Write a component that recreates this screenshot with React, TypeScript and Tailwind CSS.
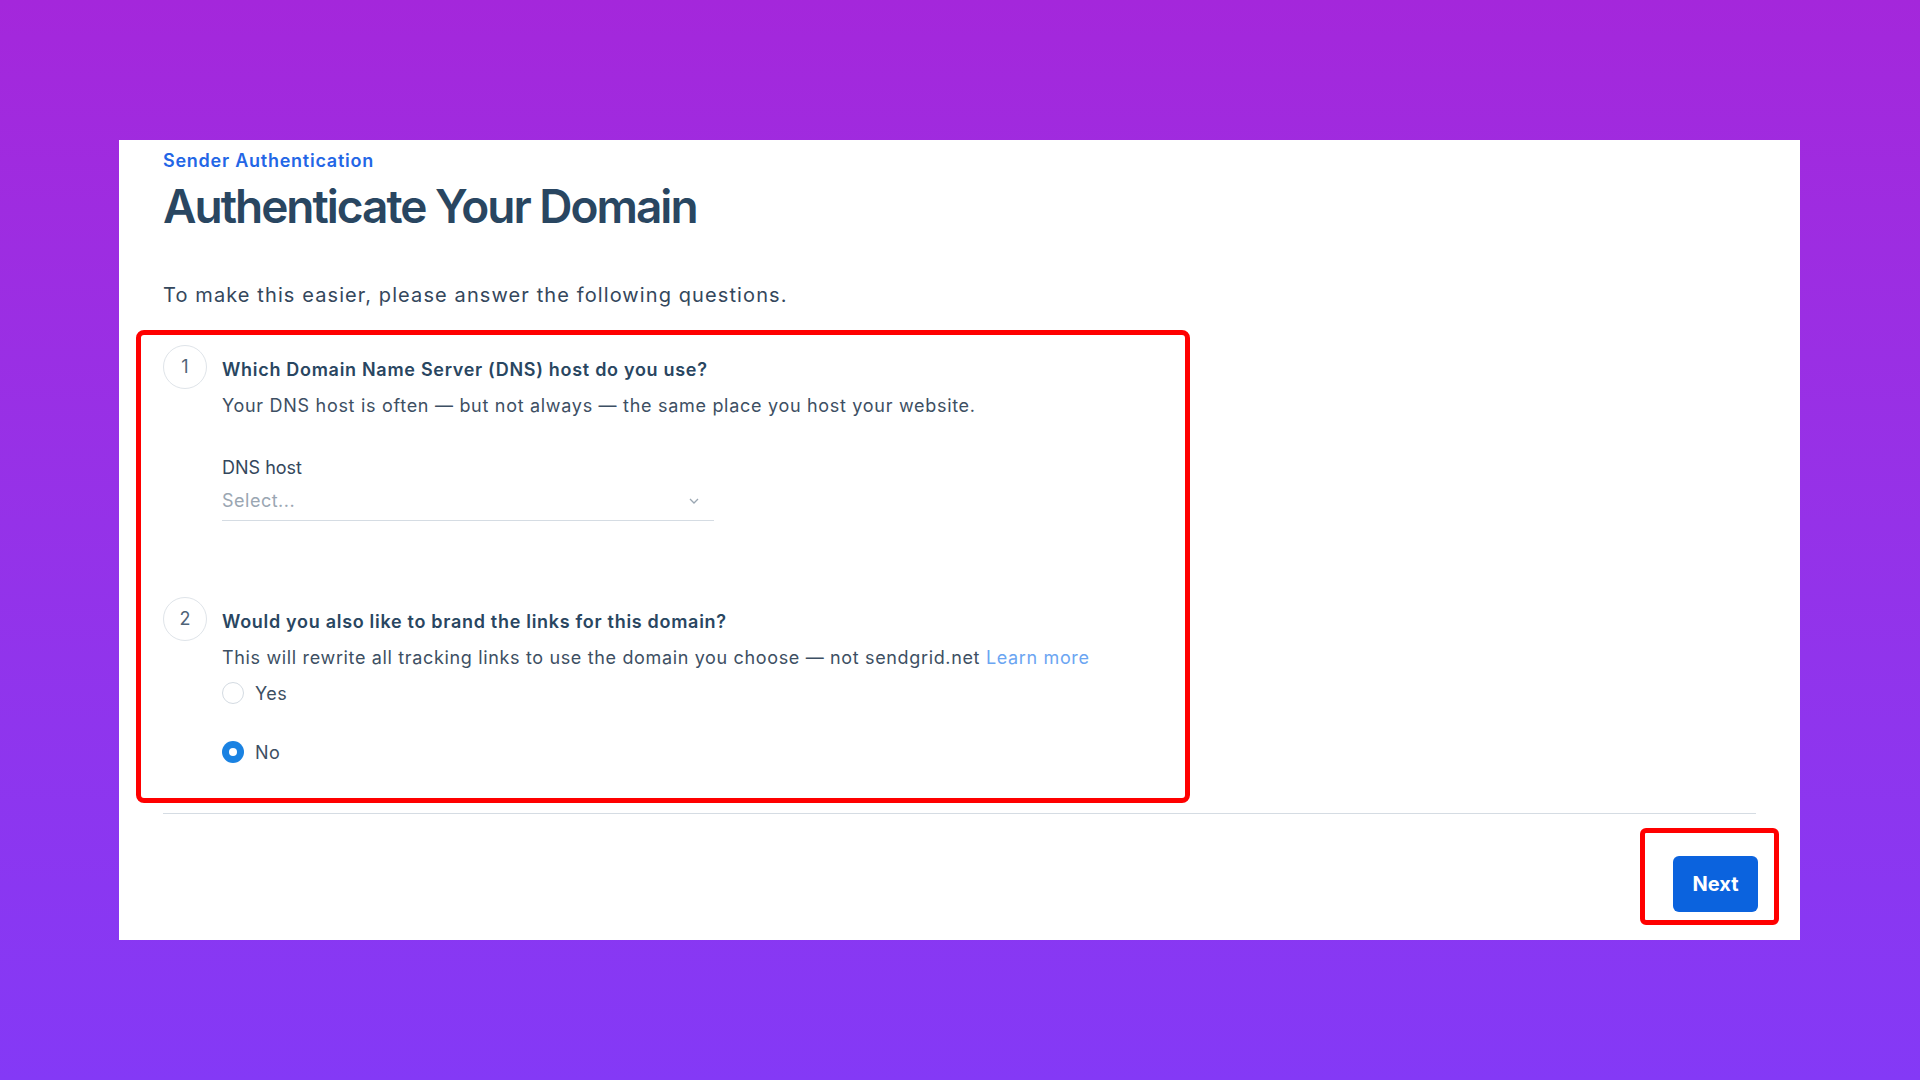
import React from "react";

const font = { fontFamily: "Inter, 'Noto Sans', Arial, sans-serif" };

function StepCircle({ n }: { n: number }) {
  return (
    <div className="flex h-[44px] w-[44px] shrink-0 items-center justify-center rounded-full border-[1.5px] border-[#dfe4e9] text-[18px] leading-none text-[#4f6478]">
      {n}
    </div>
  );
}

function Radio({ checked, label }: { checked?: boolean; label: string }) {
  return (
    <div className="flex items-center gap-[11px]">
      {checked ? (
        <div className="flex h-[22px] w-[22px] items-center justify-center rounded-full bg-[#1a82e2]">
          <div className="h-[8px] w-[8px] rounded-full bg-white" />
        </div>
      ) : (
        <div className="h-[22px] w-[22px] rounded-full border-[1.5px] border-[#d4dbe2] bg-white" />
      )}
      <span className="pt-[3px] text-[18px] leading-[24px] tracking-[0.5px] text-[#3d4f63]">{label}</span>
    </div>
  );
}

export default function App() {
  return (
    <div
      className="flex h-[1080px] w-[1920px] items-start bg-gradient-to-b from-[#a427db] to-[#8439f6] pl-[119px] pt-[140px]"
      style={font}
    >
      <div className="flex h-[800px] w-[1681px] flex-col bg-white px-[44px] pt-[9px]">
        <div className="text-[18px] font-semibold leading-[24px] tracking-[0.75px] text-[#2366e6]">
          Sender Authentication
        </div>
        <h1 className="mt-[5px] text-[46px] font-semibold leading-[56px] tracking-[-2px] text-[#294661]">
          Authenticate Your Domain
        </h1>
        <p className="mt-[47px] text-[20px] leading-[28px] tracking-[1.1px] text-[#34475c]">
          To make this easier, please answer the following questions.
        </p>

        <div className="-ml-[27px] mt-[21px] w-[1054px] rounded-[8px] border-[5px] border-[#ff0000] pb-[33px] pl-[22px] pt-[10px]">
          {/* Question 1 */}
          <div className="flex gap-[15px]">
            <StepCircle n={1} />
            <div className="flex flex-col pt-[13px]">
              <div className="text-[18px] font-semibold leading-[24px] tracking-[0.7px] text-[#294661]">
                Which Domain Name Server (DNS) host do you use?
              </div>
              <div className="mt-[12px] text-[18px] leading-[24px] tracking-[0.7px] text-[#3d4f63]">
                Your DNS host is often — but not always — the same place you host your website.
              </div>
              <div className="mt-[38px] text-[18px] leading-[24px] text-[#34475c]">DNS host</div>
              <div className="mt-[9px] flex h-[32px] w-[492px] items-start justify-between border-b border-[#d5dce3]">
                <span className="text-[18px] leading-[24px] tracking-[0.5px] text-[#9aa6b2]">Select...</span>
                <svg width="10" height="6" viewBox="0 0 10 6" className="mr-[15px] mt-[9px]">
                  <polyline points="1,1 5,5 9,1" fill="none" stroke="#9aa6b2" strokeWidth="1.3" />
                </svg>
              </div>
            </div>
          </div>

          {/* Question 2 */}
          <div className="mt-[76px] flex gap-[15px]">
            <StepCircle n={2} />
            <div className="flex flex-col pt-[13px]">
              <div className="text-[18px] font-semibold leading-[24px] tracking-[0.7px] text-[#294661]">
                Would you also like to brand the links for this domain?
              </div>
              <div className="mt-[12px] text-[18px] leading-[24px] tracking-[0.65px] text-[#3d4f63]">
                This will rewrite all tracking links to use the domain you choose — not sendgrid.net{" "}
                <span className="text-[#6ba5f2]">Learn more</span>
              </div>
              <div className="mt-[9px] flex flex-col gap-[32px]">
                <Radio label="Yes" />
                <Radio checked label="No" />
              </div>
            </div>
          </div>
        </div>

        <div className="mt-[10px] h-px w-full bg-[#d5dce3]" />

        <div className="-mr-[23px] mt-[14px] flex justify-end">
          <div className="rounded-[6px] border-[5px] border-[#ff0000] pb-[8px] pl-[28px] pr-[16px] pt-[23px]">
            <button className="flex h-[56px] w-[85px] items-center justify-center rounded-[6px] bg-[#0b63de] text-[20px] font-bold text-white">
              Next
            </button>
          </div>
        </div>
      </div>
    </div>
  );
}
